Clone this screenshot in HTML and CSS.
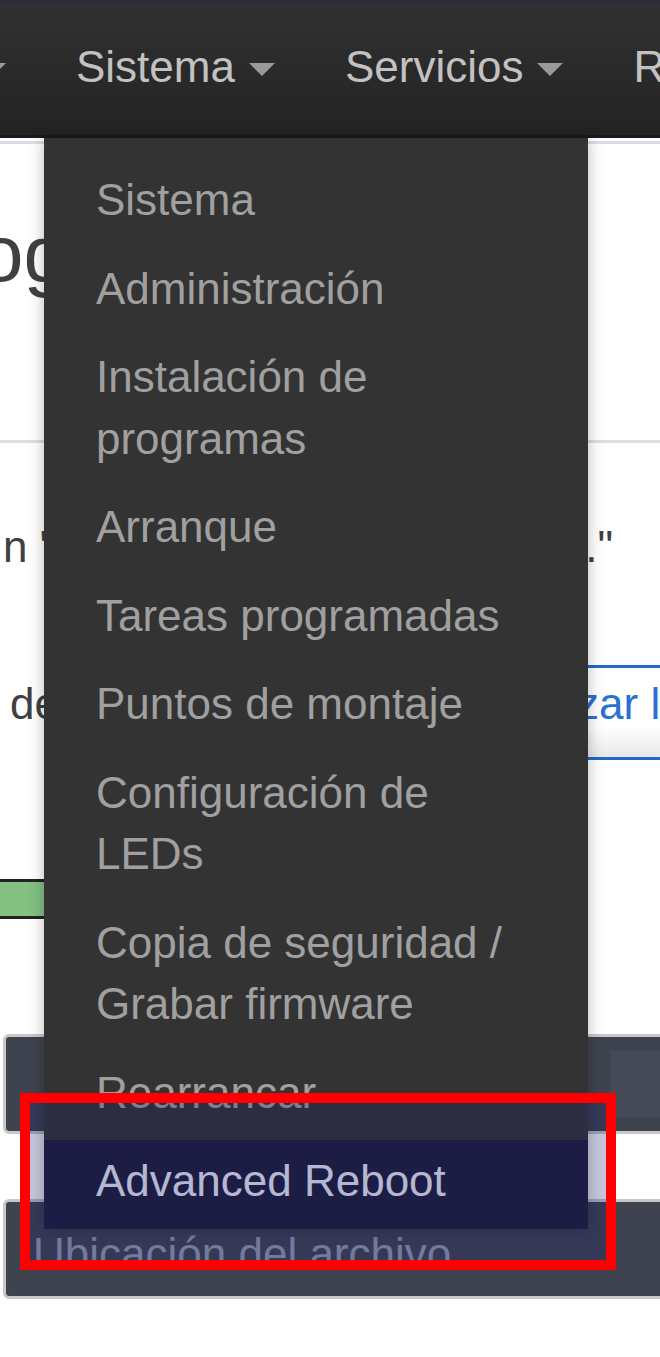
FILE: index.html
```html
<!DOCTYPE html>
<html lang="es">
<head>
  <meta charset="UTF-8">
  <title>LuCI - Sistema</title>
  <meta name="viewport" content="width=device-width, initial-scale=1.0">
  <link rel="stylesheet" href="styles.css">
</head>
<body>
  <header class="navbar">
    <ul class="nav">
      <li class="nav-item"><span>Estado</span><b class="caret"></b></li>
      <li class="nav-item open">
        <span>Sistema</span><b class="caret"></b>
        <!-- Open dropdown -->
        <ul class="dropdown-menu">
          <li><a>Sistema</a></li>
          <li><a>Administración</a></li>
          <li><a>Instalación de programas</a></li>
          <li><a>Arranque</a></li>
          <li><a>Tareas programadas</a></li>
          <li><a>Puntos de montaje</a></li>
          <li><a>Configuración de LEDs</a></li>
          <li><a>Copia de seguridad / Grabar firmware</a></li>
          <li><a>Rearrancar</a></li>
          <li class="hover"><a>Advanced Reboot</a></li>
        </ul>
      </li>
      <li class="nav-item"><span>Servicios</span><b class="caret"></b></li>
      <li class="nav-item"><span>Red</span><b class="caret"></b></li>
    </ul>
  </header>

  <main class="content">
    <h2 class="page-title">og de</h2>
    <hr class="divider">
    <p class="note">
      <span>n "Actualizar</span>
      <span class="note-end">."</span>
    </p>
    <div class="filter-row">
      <label class="filter-label">de búsqueda</label>
      <button class="btn">Actualizar listas…</button>
    </div>
    <div class="progress"><div class="progress-bar"></div></div>
    <div class="panel panel-first">
      <div class="panel-action"></div>
    </div>
    <div class="panel panel-second">
      <span class="panel-text">Ubicación del archivo</span>
    </div>
  </main>

  <!-- annotation box around the new menu entry -->
  <div class="mark"></div>
</body>
</html>
```

FILE: styles.css
```css
:root {
  --menu-bg: #333333;
  --menu-text: #a0a0a0;
  --nav-text: #c2c2c2;
  --hover-bg: #1c1c36;
  --panel-bg: #3e434f;
  --blue: #2368c8;
}

* {
  margin: 0;
  padding: 0;
  box-sizing: border-box;
}

body {
  position: relative;
  background: #fff;
  font-family: "Liberation Sans", Arial, sans-serif;
  font-size: 44px;
  color: #404040;
  overflow: hidden;
  min-height: 1357px;
}

/* Top bar */
.navbar {
  border-top: 4px solid #2a2d35;
  border-bottom: 3px solid #1a1a1a;
  background: linear-gradient(#313131, #232323);
  height: 138px;
}
.nav {
  list-style: none;
  display: flex;
  height: 100%;
  margin-left: -203px;
}
.nav-item {
  position: relative;
  display: flex;
  align-items: flex-start;
  padding: 33px 38px 0 32px;
  line-height: 60px;
  color: var(--nav-text);
  white-space: nowrap;
}
.caret {
  display: inline-block;
  margin: 26px 0 0 14px;
  border-top: 13px solid #9a9a9a;
  border-left: 13px solid transparent;
  border-right: 13px solid transparent;
}

/* Dropdown */
.dropdown-menu {
  position: absolute;
  top: calc(100% + 3px);
  left: 0;
  width: 544px;
  list-style: none;
  background: var(--menu-bg);
  padding-top: 21px;
  box-shadow: 0 0 14px rgba(0, 0, 0, 0.28);
  z-index: 5;
}
.dropdown-menu a {
  display: block;
  padding: 10px 40px 17px 52px;
  line-height: 61.5px;
  color: var(--menu-text);
  white-space: normal;
}
.dropdown-menu .hover a {
  background: var(--hover-bg);
  color: #e9eef4;
}

/* Page behind the menu */
.content {
  border-top: 3px solid #dcdce8;
  margin-top: 3px;
}
.page-title {
  margin: 62px 0 0 -21px;
  font-size: 80px;
  font-weight: normal;
  line-height: 96px;
  white-space: nowrap;
}
.divider {
  border: 0;
  border-top: 3px solid #dcdce6;
  margin-top: 138px;
}
.note {
  display: flex;
  justify-content: space-between;
  margin-top: 74px;
  padding: 0 47px 0 3px;
  line-height: 60px;
  white-space: nowrap;
}
.filter-row {
  display: flex;
  align-items: baseline;
  margin-top: 88px;
}
.filter-label {
  flex: 0 0 415px;
  padding-left: 10px;
  white-space: nowrap;
}
.btn {
  flex: none;
  font: inherit;
  line-height: 60px;
  padding: 6px 20px 23px 27px;
  border: 3px solid var(--blue);
  border-radius: 6px;
  background: linear-gradient(#fff 65%, #e8e8e8);
  color: #2a6fd4;
  white-space: nowrap;
}

.progress {
  width: 400px;
  margin-top: 119px;
  border-top: 3px solid #222;
  border-bottom: 3px solid #222;
}
.progress-bar {
  height: 34px;
  background: #82c182;
}

.panel {
  display: flex;
  margin: 0 -10px 0 3px;
  height: 100px;
  border: 3px solid #c8c8c8;
  border-radius: 6px;
  background: var(--panel-bg);
}
.panel-first {
  margin-top: 115px;
  justify-content: flex-end;
  align-items: center;
}
.panel-action {
  width: 57px;
  height: 67px;
  background: #454a56;
}
.panel-second {
  margin-top: 65px;
  padding: 22px 0 0 27px;
  line-height: 60px;
  color: #8f9bb0;
}
.panel-text {
  white-space: nowrap;
}

/* Red annotation */
.mark {
  position: absolute;
  left: 20px;
  top: 1093px;
  width: 596px;
  height: 177px;
  border: 10px solid #ff0000;
  background: rgba(30, 30, 110, 0.26);
  z-index: 10;
}
```
